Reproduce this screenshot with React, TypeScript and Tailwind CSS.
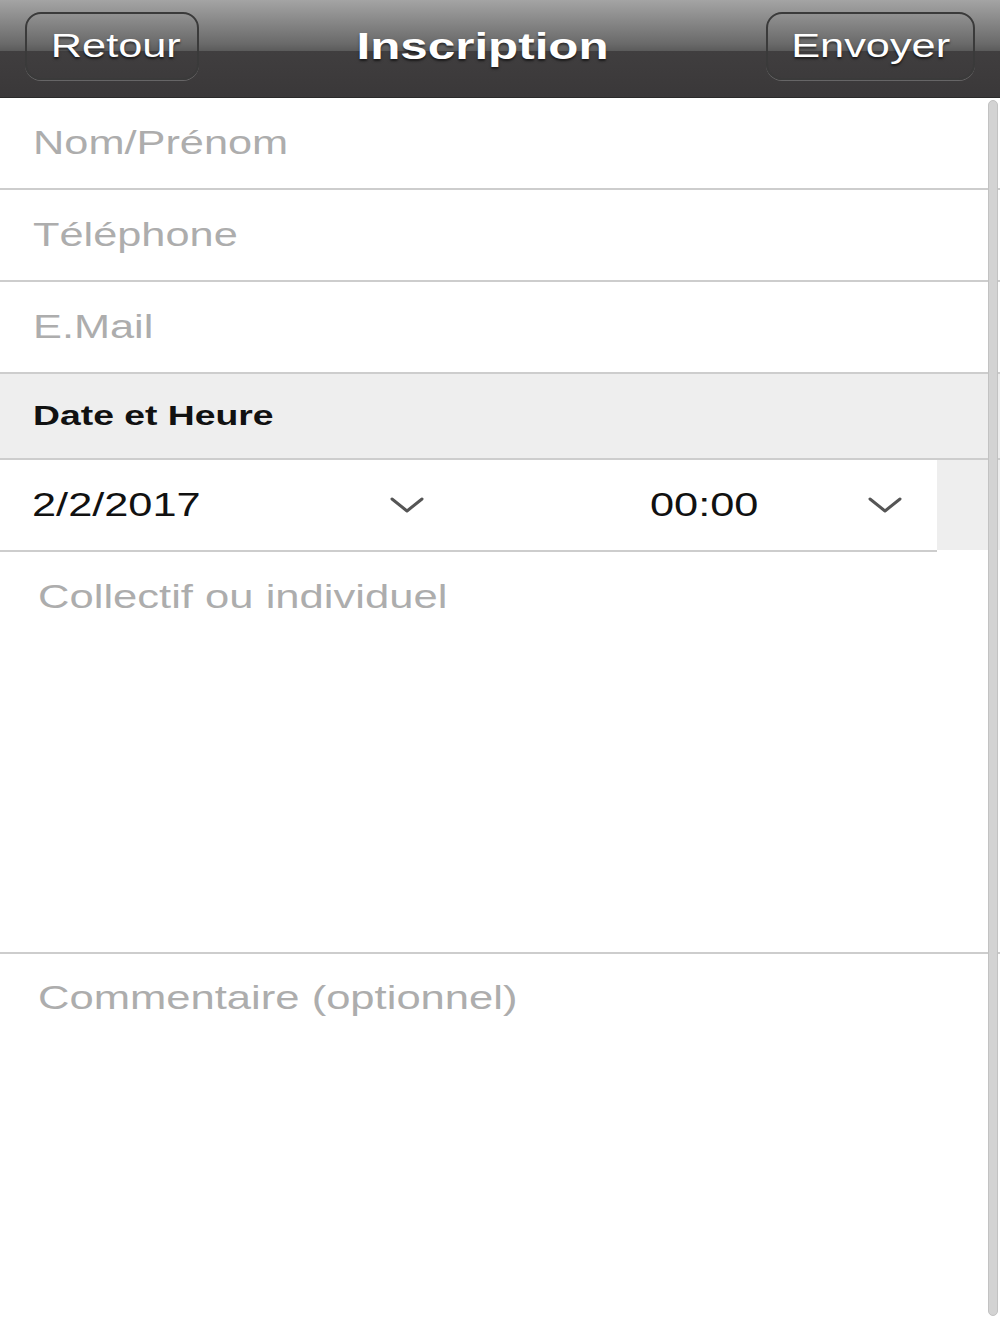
import React from "react";

// The shot is a 750px-wide phone screen stretched to 1000px, so text is widened on x.
const Stretch: React.FC<{ children: React.ReactNode; className?: string }> = ({ children, className }) => (
  <span className={"inline-block whitespace-nowrap scale-x-[1.333] " + (className ?? "origin-left")}>{children}</span>
);

const Chevron = () => (
  <svg width="34" height="18" viewBox="0 0 34 18" fill="none">
    <path d="M2 3 L17 15 L32 3" stroke="#555" strokeWidth="3" strokeLinecap="round" strokeLinejoin="round" />
  </svg>
);

const HeaderButton: React.FC<{ label: string; width: string; pad?: string }> = ({ label, width, pad }) => (
  <button
    className={
      "h-[68px] rounded-[16px] border-2 border-[#3a3a3a] shadow-[0_1px_0_rgba(255,255,255,0.22)] flex items-center justify-center text-white text-[32.5px] leading-none [text-shadow:0_2px_2px_rgba(0,0,0,0.6)] " +
      width +
      " " +
      (pad ?? "")
    }
  >
    <Stretch className="origin-center">{label}</Stretch>
  </button>
);

const Field: React.FC<{ placeholder: string }> = ({ placeholder }) => (
  <div className="h-[92px] border-b-2 border-[#cdcdcd] flex items-center pl-[33px] text-[32.5px] text-[#adadad]">
    <Stretch>{placeholder}</Stretch>
  </div>
);

export default function App() {
  return (
    <div className="relative w-full min-h-[1334px] bg-white font-['Liberation_Sans',Arial,sans-serif] overflow-hidden">
      <header className="h-[98px] flex items-start pt-[12px] px-[25px] bg-[linear-gradient(to_bottom,#a4a4a4_0%,#6a6a6a_45%,#5a5a5a_53%,#403e3f_53%,#3a3839_100%)] border-b border-[#2a2a2a]">
        <HeaderButton label="Retour" width="w-[174px]" pad="pl-[8px]" />
        <div className="flex-1 h-[68px] flex items-center justify-center text-white font-bold text-[37px] leading-none [text-shadow:0_2px_2px_rgba(0,0,0,0.6)]">
          <Stretch className="origin-center">Inscription</Stretch>
        </div>
        <HeaderButton label="Envoyer" width="w-[209px]" />
      </header>

      <Field placeholder="Nom/Prénom" />
      <Field placeholder="Téléphone" />
      <Field placeholder="E.Mail" />

      <div className="h-[86px] bg-[#eeeeee] border-b-2 border-[#cdcdcd] flex items-center pl-[33px] text-[28px] font-bold text-[#111]">
        <Stretch>Date et Heure</Stretch>
      </div>

      <div className="flex h-[92px]">
        <div className="w-[937px] border-b-2 border-[#cdcdcd] flex items-center text-[32.5px] text-[#111]">
          <div className="w-[390px] pl-[32px]">
            <Stretch>2/2/2017</Stretch>
          </div>
          <Chevron />
          <div className="w-[226px]" />
          <div className="w-[218px]">
            <Stretch>00:00</Stretch>
          </div>
          <Chevron />
        </div>
        <div className="flex-1 h-[90px] bg-[#eeeeee]" />
      </div>

      <div className="h-[402px] border-b-2 border-[#cdcdcd] pl-[38px] pt-[25px] text-[32.7px] leading-[40px] text-[#adadad]">
        <Stretch>Collectif ou individuel</Stretch>
      </div>

      <div className="h-[380px] pl-[38px] pt-[24px] text-[32.7px] leading-[40px] text-[#adadad]">
        <Stretch>Commentaire (optionnel)</Stretch>
      </div>

      {/* overlay scroll indicator */}
      <div className="absolute right-[2px] top-[100px] w-[10px] h-[1216px] rounded-full bg-[#d3d3d3] border border-[#c2c2c2]" />
    </div>
  );
}
